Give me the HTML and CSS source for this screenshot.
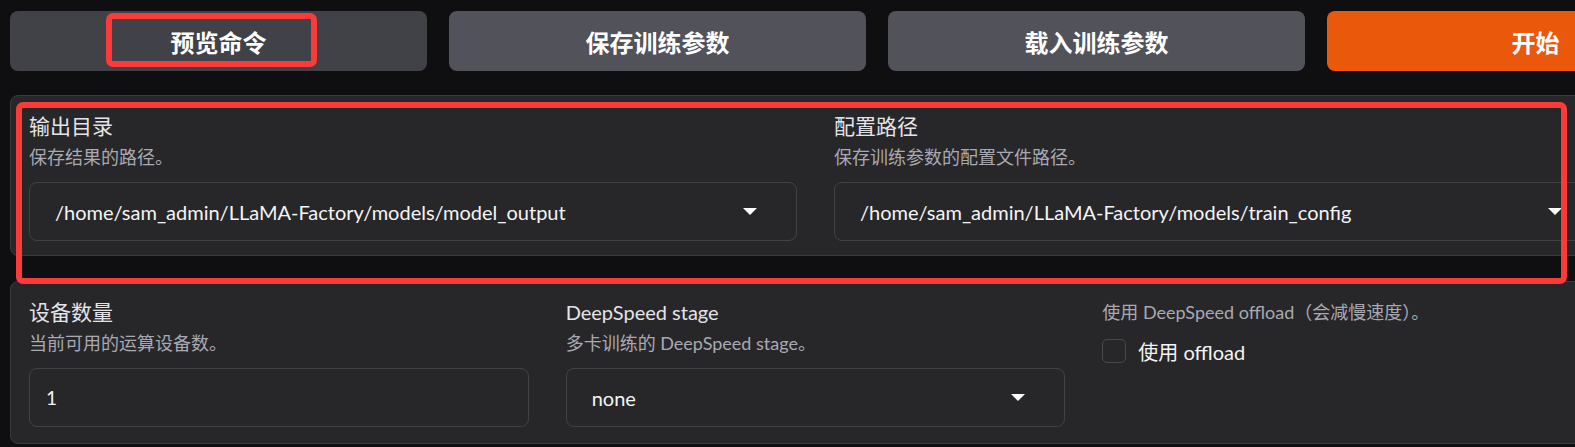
FILE: index.html
```html
<!DOCTYPE html>
<html lang="zh-CN">
<head>
  <meta charset="UTF-8">
  <meta name="viewport" content="width=device-width, initial-scale=1.0">
  <title>LLaMA Board - Train</title>
  <link rel="stylesheet" href="styles.css">
</head>
<body>
  <div class="page">
    <div class="actions">
      <button class="btn btn-dim">预览命令</button>
      <button class="btn">保存训练参数</button>
      <button class="btn">载入训练参数</button>
      <button class="btn btn-primary">开始</button>
    </div>

    <div class="panel">
      <div class="row">
        <div class="field">
          <div class="label">输出目录</div>
          <div class="info">保存结果的路径。</div>
          <div class="select">
            <span>/home/sam_admin/LLaMA-Factory/models/model_output</span>
            <span class="caret"></span>
          </div>
        </div>
        <div class="field">
          <div class="label">配置路径</div>
          <div class="info">保存训练参数的配置文件路径。</div>
          <div class="select">
            <span>/home/sam_admin/LLaMA-Factory/models/train_config</span>
            <span class="caret"></span>
          </div>
        </div>
      </div>
    </div>

    <div class="panel panel-second">
      <div class="row">
        <div class="field">
          <div class="label">设备数量</div>
          <div class="info">当前可用的运算设备数。</div>
          <div class="select number">
            <span>1</span>
          </div>
        </div>
        <div class="field">
          <div class="label label-latin">DeepSpeed stage</div>
          <div class="info">多卡训练的 DeepSpeed stage。</div>
          <div class="select">
            <span>none</span>
            <span class="caret"></span>
          </div>
        </div>
        <div class="field">
          <div class="info info-top">使用 DeepSpeed offload（会减慢速度）。</div>
          <label class="check">
            <span class="box"></span>
            <span>使用 offload</span>
          </label>
        </div>
      </div>
    </div>
  </div>

  <!-- annotation boxes drawn over the screenshot -->
  <div class="mark mark-btn"></div>
  <div class="mark mark-panel"></div>
</body>
</html>
```

FILE: styles.css
```css
body {
  margin: 0;
  background-color: #0f0f11;
  font-family: Lato, "Noto Sans CJK SC", sans-serif;
  overflow: hidden;
}
.page {
  width: 1760px;
  padding: 11px 0 0 10px;
}
.actions {
  display: flex;
  gap: 22px;
}
.btn {
  flex: none;
  width: 417px;
  height: 60px;
  border: none;
  border-radius: 8px;
  background-color: #52525b;
  color: #fff;
  font-family: Lato, "Noto Sans CJK SC", sans-serif;
  font-size: 24px;
  font-weight: 700;
}
.btn-dim {
  background-color: #414148;
}
.btn-primary {
  background-color: #ea580c;
}
.panel {
  box-sizing: border-box;
  width: 1611px;
  margin-top: 24px;
  padding: 16px 18px 14px;
  background-color: #27272a;
  border: 1px solid #3a3a40;
  border-radius: 8px;
}
.panel-second {
  margin-top: 25px;
  padding-bottom: 16px;
}
.row {
  display: flex;
  gap: 37px;
}
.field {
  flex: 1;
  min-width: 0;
}
.label {
  font-size: 21px;
  line-height: 28px;
  color: #e4e4e7;
}
.label-latin {
  font-size: 20px;
}
.info {
  margin-top: 4px;
  font-size: 18px;
  line-height: 27px;
  color: #a9a9b2;
}
.info-top {
  margin-top: 0;
  line-height: 28px;
}
.select {
  box-sizing: border-box;
  height: 59px;
  margin-top: 11px;
  padding: 0 39px 0 25px;
  display: flex;
  align-items: center;
  justify-content: space-between;
  border: 1px solid #414147;
  border-radius: 8px;
  font-size: 20px;
  color: #f4f4f5;
  white-space: nowrap;
}
.select.number {
  padding-left: 16px;
  font-size: 19px;
}
.caret {
  width: 0;
  height: 0;
  border-left: 7px solid transparent;
  border-right: 7px solid transparent;
  border-top: 7px solid #fff;
}
.check {
  display: flex;
  align-items: center;
  height: 28px;
  margin-top: 11px;
  font-size: 20px;
  color: #f4f4f5;
}
.box {
  box-sizing: border-box;
  width: 24px;
  height: 24px;
  margin-right: 12px;
  border: 1px solid #48484f;
  border-radius: 5px;
  background-color: #27272a;
}
.mark {
  position: absolute;
  box-sizing: border-box;
  border: 6px solid #fc3a3a;
  border-radius: 7px;
}
.mark-btn {
  left: 106px;
  top: 13px;
  width: 211px;
  height: 54px;
}
.mark-panel {
  left: 16px;
  top: 102px;
  width: 1551px;
  height: 182px;
}
```
